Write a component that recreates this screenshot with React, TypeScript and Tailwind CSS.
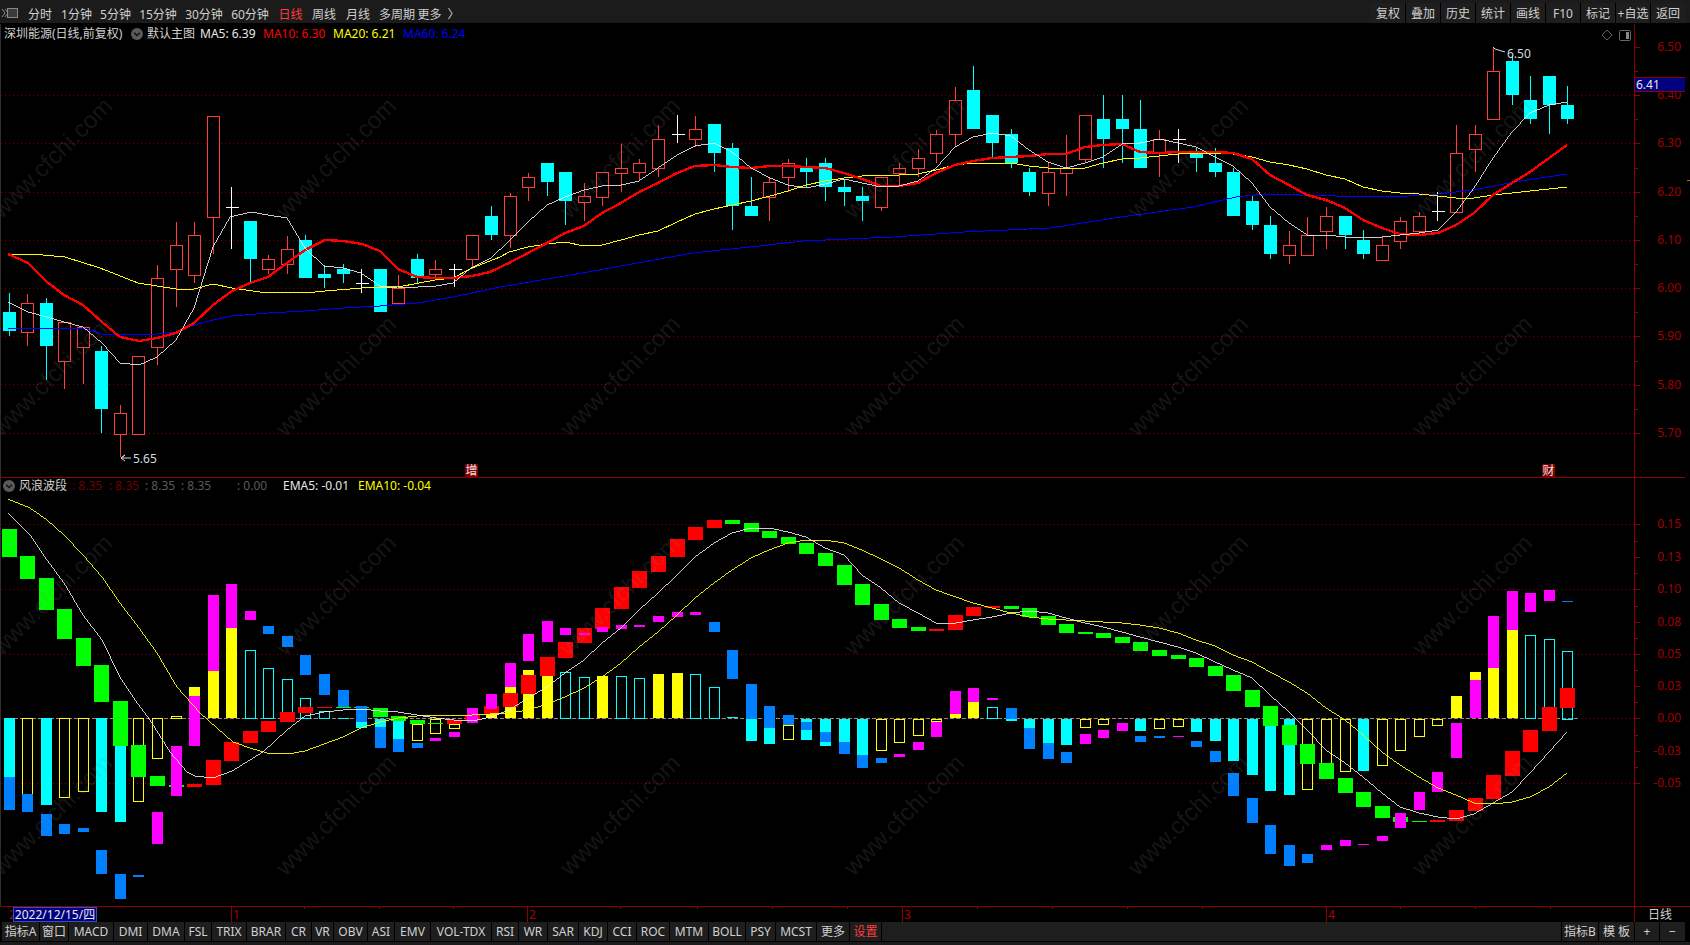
import React from "react";

type Candle = [string, number, number, number, number];
type Seg = [number, string, number, number];

// kind (r up, c down, x doji), body top, body bottom, high, low
const CANDLES: Candle[] = [
  ["c", 312, 331, 293, 336], ["r", 303, 332, 294, 346], ["c", 303, 346, 298, 380], ["r", 322, 361, 322, 389],
  ["r", 327, 347, 327, 384], ["c", 351, 409, 346, 433], ["r", 413, 434, 405, 457], ["r", 356, 434, 356, 434],
  ["r", 278, 347, 265, 365], ["r", 245, 269, 222, 307], ["r", 235, 275, 222, 283], ["r", 116, 217, 116, 254],
  ["x", 207, 207, 187, 249], ["c", 221, 259, 221, 283], ["r", 259, 269, 255, 274], ["r", 249, 264, 236, 274],
  ["c", 240, 278, 235, 278], ["c", 274, 278, 265, 288], ["c", 269, 274, 264, 283], ["x", 283, 283, 269, 293],
  ["c", 269, 312, 269, 312], ["r", 288, 303, 275, 303], ["c", 259, 278, 254, 283], ["r", 269, 274, 260, 278],
  ["x", 269, 269, 264, 287], ["r", 235, 259, 235, 269], ["c", 216, 235, 206, 240], ["r", 196, 235, 193, 248],
  ["r", 177, 187, 173, 201], ["c", 163, 182, 163, 196], ["c", 172, 201, 172, 225], ["r", 196, 202, 183, 221],
  ["r", 172, 197, 172, 206], ["r", 168, 173, 144, 192], ["r", 163, 172, 159, 180], ["r", 139, 168, 125, 177],
  ["x", 134, 134, 115, 143], ["r", 129, 139, 116, 147], ["c", 124, 153, 124, 172], ["c", 148, 206, 143, 230],
  ["c", 206, 216, 177, 216], ["r", 182, 197, 177, 221], ["r", 163, 177, 159, 192], ["c", 168, 172, 158, 187],
  ["c", 163, 187, 158, 201], ["c", 187, 192, 180, 206], ["c", 196, 201, 187, 221], ["r", 177, 207, 177, 211],
  ["r", 168, 173, 163, 185], ["r", 158, 168, 149, 177], ["r", 134, 153, 130, 163], ["r", 100, 134, 87, 147],
  ["c", 90, 129, 66, 129], ["c", 115, 143, 115, 158], ["c", 134, 163, 129, 168], ["c", 172, 192, 168, 196],
  ["r", 172, 193, 162, 206], ["r", 168, 173, 135, 196], ["r", 115, 159, 115, 162], ["c", 119, 139, 95, 168],
  ["c", 119, 129, 95, 163], ["c", 129, 168, 100, 168], ["r", 139, 153, 130, 177], ["x", 139, 139, 129, 163],
  ["c", 153, 158, 148, 172], ["c", 163, 172, 148, 177], ["c", 172, 216, 168, 216], ["c", 201, 225, 196, 230],
  ["c", 225, 254, 216, 259], ["r", 245, 255, 231, 264], ["r", 235, 255, 217, 255], ["r", 216, 231, 207, 249],
  ["c", 216, 235, 216, 249], ["c", 240, 254, 230, 259], ["r", 245, 260, 237, 260], ["r", 221, 241, 217, 249],
  ["r", 216, 231, 212, 235], ["x", 211, 211, 192, 221], ["r", 153, 212, 125, 212], ["r", 134, 149, 125, 172],
  ["r", 71, 119, 47, 119], ["c", 61, 95, 55, 105], ["c", 100, 119, 76, 124], ["c", 76, 105, 76, 134],
  ["c", 105, 119, 86, 124],
];

const MA5 =
  "8,302 28,312 47,317 64,322 83,327 102,343 120,363 139,365 157,357 176,340 194,308 213,247 230,217 251,212 268,215 287,218 305,248 324,266 343,268 361,273 380,286 398,287 418,287 436,286 453,283 471,268 491,258 509,241 528,222 547,205 565,197 584,190 602,186 621,185 639,181 658,168 677,155 695,146 714,143 732,152 751,168 770,178 788,185 806,188 825,184 844,179 862,183 881,187 899,186 918,181 936,168 955,147 973,137 992,133 1011,136 1029,150 1048,162 1066,168 1085,163 1103,157 1122,144 1140,143 1159,139 1178,143 1196,147 1215,157 1233,166 1252,183 1270,207 1289,223 1307,235 1326,235 1345,237 1363,237 1382,237 1400,235 1419,233 1438,230 1456,212 1474,188 1493,158 1512,132 1530,113 1549,105 1567,102";
const MA10 =
  "8,254 28,263 47,282 64,295 83,305 102,322 120,337 139,341 157,338 176,333 194,323 213,305 232,291 250,283 268,277 287,263 305,250 325,240 343,241 362,244 380,251 398,269 417,277 435,278 453,278 472,276 490,272 509,263 528,253 547,243 565,233 584,226 602,213 621,203 639,192 658,183 677,173 695,166 714,165 732,167 751,168 770,166 788,166 806,167 825,168 844,173 862,179 881,186 899,186 918,183 936,173 955,165 973,161 992,158 1011,157 1029,156 1048,154 1066,154 1085,147 1103,145 1122,144 1140,152 1159,153 1178,152 1196,152 1215,152 1233,153 1252,159 1270,175 1289,185 1307,195 1326,200 1345,208 1363,220 1382,228 1400,234 1419,235 1438,233 1456,225 1474,213 1493,195 1512,183 1530,172 1549,158 1567,145";
const MA20 =
  "8,254 32,254 65,257 100,268 138,283 176,289 194,289 213,284 232,288 260,292 287,292 305,293 325,291 362,288 398,287 435,280 453,278 472,268 500,257 509,252 528,247 547,244 565,242 584,246 602,245 621,240 639,235 658,231 677,222 695,214 714,209 732,205 751,201 770,196 788,191 806,185 825,181 844,178 862,176 881,175 899,175 918,174 936,170 955,165 973,163 992,163 1011,163 1029,166 1048,168 1066,169 1085,168 1103,163 1122,159 1140,158 1159,156 1178,154 1196,153 1215,153 1233,154 1252,157 1270,162 1289,165 1307,169 1326,175 1345,179 1363,187 1382,191 1400,193 1419,194 1438,196 1456,198 1474,198 1493,195 1512,193 1530,191 1549,189 1567,187";
const MA60 =
  "8,329 83,328 102,334 139,335 157,334 176,332 194,325 213,320 232,316 268,313 305,311 343,308 380,306 417,303 453,297 500,287 571,275 643,262 693,253 750,247 803,241 893,237 964,232 1050,228 1121,217 1193,207 1236,197 1264,194 1336,196 1407,196 1438,194 1474,190 1514,182 1567,174";
const EMA5 =
  "8,513 30,535 47,560 64,583 83,615 102,640 120,677 135,700 150,720 170,752 187,772 195,776 213,778 232,771 250,760 263,752 287,730 305,716 324,712 343,710 361,709 380,711 398,712 417,715 436,718 454,720 472,721 491,717 509,710 528,698 547,687 565,673 584,660 602,643 621,628 639,610 658,593 677,575 695,557 714,543 732,533 751,528 769,528 788,532 806,537 825,548 844,555 862,575 881,588 899,603 918,613 936,623 950,624 973,620 992,617 1011,613 1029,611 1048,613 1066,618 1085,623 1103,627 1122,632 1140,637 1159,642 1178,647 1196,653 1215,662 1233,670 1252,678 1270,695 1289,712 1307,730 1326,750 1345,763 1363,777 1382,793 1400,807 1419,813 1438,817 1456,819 1474,814 1493,803 1512,792 1530,773 1549,752 1567,732";
const EMA10 =
  "8,499 30,508 47,520 64,535 83,555 102,577 120,603 139,628 157,653 177,687 200,713 217,728 233,742 253,749 267,753 288,754 305,751 324,744 343,737 361,728 380,722 398,718 417,716 436,715 454,715 472,715 490,714 509,713 528,710 547,704 565,697 584,688 602,677 621,663 639,647 658,632 677,615 695,598 714,583 732,570 751,558 769,550 788,543 806,540 825,540 844,543 862,550 881,559 899,568 918,580 936,590 950,595 973,603 992,608 1011,613 1029,617 1048,619 1066,620 1085,621 1103,622 1122,623 1140,625 1159,628 1178,633 1196,640 1215,646 1233,655 1252,662 1270,672 1289,682 1307,693 1326,708 1345,720 1363,735 1382,752 1400,765 1419,777 1438,788 1456,795 1474,803 1493,804 1512,802 1530,797 1549,787 1567,773";

// bar index, kind, top, bottom
const HIST: Seg[] = [
  [0, "c", 718, 777], [1, "Y", 718, 794], [2, "c", 718, 805], [3, "Y", 718, 797], [4, "Y", 718, 791], [5, "c", 718, 812],
  [6, "c", 718, 822], [7, "Y", 718, 801], [8, "Y", 718, 758], [9, "Y", 716, 718], [10, "y", 687, 696], [11, "y", 671, 718],
  [12, "y", 628, 718], [13, "C", 650, 718], [14, "C", 668, 718], [15, "C", 679, 718], [16, "C", 698, 718], [17, "C", 711, 718],
  [18, "c", 718, 719], [19, "c", 722, 728], [20, "c", 719, 727], [21, "c", 721, 739], [22, "Y", 724, 740], [23, "Y", 719, 733],
  [24, "Y", 724, 728], [26, "y", 714, 718], [27, "y", 687, 718], [28, "y", 670, 718], [29, "y", 676, 718], [30, "C", 672, 718],
  [31, "C", 677, 718], [32, "y", 676, 718], [33, "C", 676, 718], [34, "C", 678, 718], [35, "y", 674, 718], [36, "y", 673, 718],
  [37, "C", 674, 718], [38, "C", 687, 718], [39, "c", 717, 718], [40, "c", 719, 741], [41, "c", 728, 744], [42, "Y", 725, 739],
  [43, "c", 719, 740], [44, "c", 719, 746], [45, "c", 719, 742], [46, "c", 719, 755], [47, "Y", 719, 750], [48, "Y", 719, 742],
  [49, "Y", 719, 735], [50, "Y", 719, 721], [51, "y", 714, 718], [52, "y", 702, 718], [53, "C", 707, 718], [54, "c", 719, 721],
  [55, "c", 719, 728], [56, "c", 719, 743], [57, "c", 719, 745], [58, "Y", 719, 727], [59, "Y", 719, 724], [61, "c", 719, 731],
  [62, "Y", 719, 728], [63, "Y", 719, 726], [64, "c", 719, 732], [65, "c", 719, 741], [66, "c", 719, 761], [67, "c", 719, 775],
  [68, "c", 719, 791], [69, "c", 719, 795], [70, "Y", 719, 789], [71, "Y", 719, 763], [72, "Y", 719, 771], [73, "c", 719, 771],
  [74, "Y", 719, 765], [75, "Y", 719, 750], [76, "Y", 719, 736], [77, "Y", 719, 725], [78, "y", 696, 718], [79, "y", 672, 680],
  [80, "y", 668, 718], [81, "y", 630, 718], [82, "C", 635, 718], [83, "C", 639, 718], [84, "C", 651, 719],
];

const WAVE: Seg[] = [
  [0, "g", 529, 557], [1, "g", 556, 579], [2, "g", 578, 610], [3, "g", 609, 639], [4, "g", 638, 666], [5, "g", 665, 702],
  [6, "g", 701, 746], [7, "g", 745, 777], [8, "g", 776, 786], [9, "g", 785, 787], [10, "r", 784, 787], [11, "r", 760, 785],
  [12, "r", 742, 761], [13, "r", 731, 743], [14, "r", 721, 732], [15, "r", 712, 722], [16, "r", 707, 713], [17, "r", 707, 708],
  [18, "g", 707, 708], [19, "g", 707, 708], [20, "g", 708, 717], [21, "g", 716, 721], [22, "g", 720, 724], [23, "g", 723, 724],
  [24, "r", 720, 724], [25, "r", 715, 720], [26, "r", 706, 714], [27, "r", 693, 707], [28, "r", 675, 694], [29, "r", 657, 676],
  [30, "r", 642, 658], [31, "r", 628, 643], [32, "r", 608, 629], [33, "r", 587, 609], [34, "r", 571, 588], [35, "r", 556, 572],
  [36, "r", 539, 557], [37, "r", 527, 540], [38, "r", 520, 528], [39, "g", 520, 524], [40, "g", 523, 532], [41, "g", 531, 538],
  [42, "g", 537, 544], [43, "g", 543, 554], [44, "g", 553, 566], [45, "g", 565, 585], [46, "g", 584, 605], [47, "g", 604, 620],
  [48, "g", 619, 628], [49, "g", 627, 631], [50, "r", 629, 631], [51, "r", 615, 630], [52, "r", 607, 616], [53, "r", 606, 608],
  [54, "g", 606, 609], [55, "g", 608, 617], [56, "g", 616, 625], [57, "g", 624, 633], [58, "g", 632, 634], [59, "g", 633, 638],
  [60, "g", 637, 643], [61, "g", 642, 651], [62, "g", 650, 656], [63, "g", 655, 659], [64, "g", 658, 667], [65, "g", 666, 676],
  [66, "g", 675, 691], [67, "g", 690, 707], [68, "g", 706, 726], [69, "g", 725, 745], [70, "g", 744, 764], [71, "g", 763, 779],
  [72, "g", 778, 793], [73, "g", 792, 807], [74, "g", 806, 818], [75, "g", 817, 822], [76, "g", 821, 822], [77, "r", 820, 822],
  [78, "r", 810, 821], [79, "r", 798, 811], [80, "r", 775, 799], [81, "r", 751, 776], [82, "r", 730, 752], [83, "r", 707, 731],
  [84, "r", 688, 708],
];

const SPOT: Seg[] = [
  [0, "b", 777, 810], [1, "b", 794, 812], [2, "b", 814, 836], [3, "b", 824, 834], [4, "b", 828, 832], [5, "b", 850, 874],
  [6, "b", 874, 899], [7, "b", 875, 877], [8, "m", 812, 844], [9, "m", 746, 796], [10, "m", 696, 746], [11, "m", 595, 671],
  [12, "m", 584, 628], [13, "m", 611, 620], [14, "b", 626, 634], [15, "b", 636, 647], [16, "b", 655, 675], [17, "b", 674, 695],
  [18, "b", 690, 707], [19, "b", 706, 722], [20, "b", 727, 748], [21, "b", 739, 752], [22, "b", 743, 748], [23, "m", 738, 741],
  [24, "m", 732, 737], [25, "m", 708, 723], [26, "m", 694, 709], [27, "m", 663, 687], [28, "m", 634, 661], [29, "m", 621, 642],
  [30, "m", 628, 635], [31, "m", 633, 635], [32, "m", 627, 632], [33, "m", 625, 629], [34, "m", 625, 627], [35, "m", 616, 622],
  [36, "m", 612, 617], [37, "m", 612, 615], [38, "b", 622, 632], [39, "b", 650, 679], [40, "b", 684, 719], [41, "b", 706, 728],
  [42, "b", 715, 725], [43, "b", 722, 730], [44, "b", 732, 742], [45, "b", 742, 754], [46, "b", 755, 768], [47, "b", 758, 763],
  [48, "m", 754, 757], [49, "m", 742, 750], [50, "m", 722, 737], [51, "m", 691, 714], [52, "m", 688, 702], [53, "m", 698, 700],
  [54, "b", 708, 719], [55, "b", 728, 749], [56, "b", 743, 759], [57, "b", 752, 763], [58, "m", 734, 744], [59, "m", 730, 738],
  [60, "m", 723, 731], [61, "b", 736, 742], [62, "b", 736, 738], [63, "m", 736, 737], [64, "b", 741, 747], [65, "b", 751, 762],
  [66, "b", 773, 796], [67, "b", 798, 823], [68, "b", 825, 854], [69, "b", 845, 866], [70, "b", 854, 863], [71, "m", 845, 850],
  [72, "m", 840, 846], [73, "m", 844, 845], [74, "m", 836, 841], [75, "m", 813, 828], [76, "m", 792, 810], [77, "m", 772, 792],
  [78, "m", 723, 758], [79, "m", 680, 718], [80, "m", 616, 668], [81, "m", 591, 630], [82, "m", 593, 612], [83, "m", 590, 601],
  [84, "b", 601, 602],
];

const COLORS: Record<string, string> = {
  c: "#00ffff", C: "#00ffff", y: "#ffff00", Y: "#ffff00", g: "#00ff00", r: "#ff0000", b: "#0080ff", m: "#ff00ff",
};

const UPPER_GRID = [95.5, 143.5, 192.5, 240.5, 288.5, 336.5, 384.5, 433.5];
const LOWER_GRID = [524.5, 589.5, 654.5, 783.5];

const UPPER_TICKS = [
  { y: 47, label: "6.50" }, { y: 95, label: "6.40" }, { y: 143, label: "6.30" }, { y: 192, label: "6.20" }, { y: 240, label: "6.10" },
  { y: 288, label: "6.00" }, { y: 336, label: "5.90" }, { y: 385, label: "5.80" }, { y: 433, label: "5.70" },
];
const LOWER_TICKS = [
  { y: 524, label: "0.15" }, { y: 557, label: "0.13" }, { y: 589, label: "0.10" }, { y: 622, label: "0.08" }, { y: 654, label: "0.05" },
  { y: 686, label: "0.03" }, { y: 718, label: "0.00" }, { y: 751, label: "-0.03" }, { y: 783, label: "-0.05" },
];

const LEFT_TABS = [
  { label: "分时", w: "w-[36px]" }, { label: "1分钟", w: "w-[37px]" }, { label: "5分钟", w: "w-[41px]" }, { label: "15分钟", w: "w-[44px]" },
  { label: "30分钟", w: "w-[48px]" }, { label: "60分钟", w: "w-[44px]" }, { label: "日线", w: "w-[37px]", active: true }, { label: "周线", w: "w-[30px]" },
  { label: "月线", w: "w-[38px]" }, { label: "多周期", w: "w-[40px]" }, { label: "更多  〉", w: "w-[43px]" },
];
const RIGHT_TABS = ["复权", "叠加", "历史", "统计", "画线", "F10", "标记", "+自选", "返回"];

const BOTTOM_TABS = [
  { label: "指标A", w: "w-[37px]" }, { label: "窗口", w: "w-[28px]" }, { label: "MACD", w: "w-[44px]" }, { label: "DMI", w: "w-[33px]" },
  { label: "DMA", w: "w-[36px]" }, { label: "FSL", w: "w-[26px]" }, { label: "TRIX", w: "w-[34px]" }, { label: "BRAR", w: "w-[38px]" },
  { label: "CR", w: "w-[25px]" }, { label: "VR", w: "w-[21px]" }, { label: "OBV", w: "w-[33px]" }, { label: "ASI", w: "w-[26px]" },
  { label: "EMV", w: "w-[35px]" }, { label: "VOL-TDX", w: "w-[60px]" }, { label: "RSI", w: "w-[26px]" }, { label: "WR", w: "w-[28px]" },
  { label: "SAR", w: "w-[30px]" }, { label: "KDJ", w: "w-[28px]" }, { label: "CCI", w: "w-[28px]" }, { label: "ROC", w: "w-[32px]" },
  { label: "MTM", w: "w-[38px]" }, { label: "BOLL", w: "w-[36px]" }, { label: "PSY", w: "w-[29px]" }, { label: "MCST", w: "w-[40px]" },
  { label: "更多", w: "w-[32px]" }, { label: "设置", w: "w-[31px]", active: true },
];

const WATERMARK_X = [52, 336, 620, 904, 1188, 1472];
const WEEK_TICKS = [304, 379, 453, 620, 697, 772, 847, 977, 1052, 1127, 1202, 1400, 1475, 1550];
const MONTH_TICKS = [
  { x: 231, label: "1" }, { x: 527, label: "2" }, { x: 902, label: "3" }, { x: 1326, label: "4" },
];

const barX = (i: number) => Math.round(8.5 + i * 18.557);

function Watermarks({ rows }: { rows: number[] }) {
  return (
    <>
      {rows.map((y) =>
        WATERMARK_X.map((x) => (
          <text
            key={`${x}-${y}`}
            x={x}
            y={y + 8}
            textAnchor="middle"
            transform={`rotate(-45 ${x} ${y})`}
            fill="#808080"
            fillOpacity={0.18}
            fontSize={24}
            fontFamily="'Liberation Sans', sans-serif"
          >
            www.cfchi.com
          </text>
        ))
      )}
    </>
  );
}

function Candles() {
  return (
    <g shapeRendering="crispEdges">
      {CANDLES.map(([kind, top, bot, hi, lo], i) => {
        const x = barX(i) + 0.5;
        if (kind === "x") {
          return (
            <g key={i} stroke="#ffffff">
              <line x1={x} x2={x} y1={hi} y2={lo} />
              <line x1={x - 6} x2={x + 7} y1={top + 0.5} y2={top + 0.5} />
            </g>
          );
        }
        const color = kind === "r" ? "#ff3c3c" : "#00ffff";
        return (
          <g key={i} stroke={color}>
            {hi < top && <line x1={x} x2={x} y1={hi} y2={top} />}
            {lo > bot && <line x1={x} x2={x} y1={bot} y2={lo} />}
            {kind === "r" ? (
              <rect x={x - 6} y={top + 0.5} width={12} height={bot - top} fill="#000000" />
            ) : (
              <rect x={x - 6.5} y={top} width={13} height={bot - top} fill={color} stroke="none" />
            )}
          </g>
        );
      })}
    </g>
  );
}

function Segments({ data, half }: { data: Seg[]; half: number }) {
  return (
    <g shapeRendering="crispEdges">
      {data.map(([i, kind, top, bot]) => {
        const x = barX(i) + 0.5;
        if (kind === "C" || kind === "Y") {
          return (
            <rect key={`${i}${kind}`} x={x - half + 0.5} y={top + 0.5} width={half * 2 - 1} height={bot - top} fill="none" stroke={COLORS[kind]} />
          );
        }
        return <rect key={`${i}${kind}${top}`} x={x - half} y={top} width={half * 2} height={bot - top} fill={COLORS[kind]} />;
      })}
    </g>
  );
}

function UpperChart() {
  return (
    <svg width={1634} height={453} viewBox="0 24 1634 453" className="block">
      {UPPER_GRID.map((y) => (
        <line key={y} x1={1} x2={1634} y1={y} y2={y} stroke="#800000" strokeDasharray="1 3" shapeRendering="crispEdges" />
      ))}
      <Candles />
      <g fill="none" shapeRendering="crispEdges">
        <polyline points={MA60} stroke="#0000ff" strokeWidth={1} />
        <polyline points={MA20} stroke="#ffff00" strokeWidth={1} />
        <polyline points={MA10} stroke="#ff0000" strokeWidth={2.4} />
        <polyline points={MA5} stroke="#ffffff" strokeWidth={0.8} />
      </g>

      <polyline points="1505,52 1495,49 1493,47" fill="none" stroke="#d8d8d8" />
      <text x={1507} y={58} fontSize={12} fill="#d0dce4" fontFamily="'Noto Sans', sans-serif">6.50</text>
      <polyline points="131,458 121,458 125,455 121,458 125,461" fill="none" stroke="#d8d8d8" />
      <text x={133} y={463} fontSize={12} fill="#d0dce4" fontFamily="'Noto Sans', sans-serif">5.65</text>

      <rect x={465} y={464} width={13} height={13} fill="#7f0000" />
      <text x={471.5} y={475} textAnchor="middle" fontSize={12} fill="#e8e0e0" fontFamily="'Noto Sans CJK SC', sans-serif">增</text>
      <rect x={1542} y={464} width={13} height={13} fill="#7f0000" />
      <text x={1548.5} y={475} textAnchor="middle" fontSize={12} fill="#e8e0e0" fontFamily="'Noto Sans CJK SC', sans-serif">财</text>

      <Watermarks rows={[158, 376]} />
    </svg>
  );
}

function LowerChart() {
  return (
    <svg width={1634} height={428} viewBox="0 478 1634 428" className="block">
      {LOWER_GRID.map((y) => (
        <line key={y} x1={1} x2={1634} y1={y} y2={y} stroke="#800000" strokeDasharray="1 3" shapeRendering="crispEdges" />
      ))}
      <line x1={1} x2={1634} y1={718.5} y2={718.5} stroke="#800000" strokeDasharray="1 3" shapeRendering="crispEdges" />
      <line x1={8} x2={1578} y1={718.5} y2={718.5} stroke="#8c8c8c" strokeDasharray="4 2" shapeRendering="crispEdges" />
      <Segments data={HIST} half={5.5} />
      <Segments data={WAVE} half={7.5} />
      <Segments data={SPOT} half={5.5} />
      <g fill="none" shapeRendering="crispEdges">
        <polyline points={EMA10} stroke="#ffff00" strokeWidth={0.9} />
        <polyline points={EMA5} stroke="#ffffff" strokeWidth={0.8} />
      </g>
      <Watermarks rows={[595, 815]} />
    </svg>
  );
}

function Axis({ ticks, offset }: { ticks: { y: number; label: string }[]; offset: number }) {
  return (
    <div className="relative flex-1 text-[12px] text-[#a00000]">
      {ticks.map((t, i) => (
        <React.Fragment key={t.label}>
          <div className="absolute left-0 h-px w-[5px] bg-[#8b0000]" style={{ top: t.y - offset }} />
          {i < ticks.length - 1 && (
            <div
              className="absolute left-0 h-px w-[3px] bg-[#8b0000]"
              style={{ top: Math.round((t.y + ticks[i + 1].y) / 2) - offset }}
            />
          )}
          <div className="absolute right-[4px] leading-[14px]" style={{ top: t.y - offset - 7 }}>
            {t.label}
          </div>
        </React.Fragment>
      ))}
    </div>
  );
}

function Chevron() {
  return (
    <svg width={12} height={12} viewBox="0 0 12 12" className="shrink-0">
      <circle cx={6} cy={6} r={6} fill="#5a5a5a" />
      <polyline points="3.2,4.8 6,7.6 8.8,4.8" fill="none" stroke="#111111" strokeWidth={1.4} />
    </svg>
  );
}

export default function App() {
  return (
    <div className="flex h-[945px] w-[1690px] flex-col overflow-hidden bg-black font-['Noto_Sans','Noto_Sans_CJK_SC',sans-serif] text-[12px] leading-none text-[#d0d0d0]">
      {/* Period toolbar */}
      <div className="flex h-[24px] shrink-0 border-b border-black bg-[#1b1b1b] pt-[3px] pr-[5px]">
        <div className="flex w-[22px] items-center pl-[1px]">
          <svg width={17} height={12} viewBox="0 0 17 12">
            <path d="M1 2 L4 6 L1 10 M4 2 L7 6 L4 10" fill="none" stroke="#8a8a8a" />
            <rect x={6.5} y={1.5} width={10} height={9} fill="#3a3a3a" stroke="#8a8a8a" />
          </svg>
        </div>
        {LEFT_TABS.map((t) => (
          <div key={t.label} className={`flex items-center justify-center pt-[3px] whitespace-pre ${t.w} ${t.active ? "text-[#ff3c3c]" : ""}`}>
            {t.label}
          </div>
        ))}
        <div className="ml-auto flex gap-px bg-black">
          {RIGHT_TABS.map((t) => (
            <div key={t} className="flex w-[34px] items-center justify-center bg-[#1e1e1e] pt-[2px]">
              {t}
            </div>
          ))}
        </div>
      </div>

      {/* Main chart */}
      <div className="flex h-[454px] shrink-0">
        <div className="relative w-[1634px]">
          <UpperChart />
          <div className="absolute top-0 left-0 h-full w-px bg-[#2e2e2e]" />
          <div className="absolute top-0 left-0 flex h-[20px] items-center pl-[4px] whitespace-nowrap">
            <span className="w-[127px]">深圳能源(日线,前复权)</span>
            <Chevron />
            <span className="ml-[4px] w-[53px]">默认主图</span>
            <span className="w-[63px] text-[#e8e8e8]">MA5: 6.39</span>
            <span className="w-[70px] text-[#ff0000]">MA10: 6.30</span>
            <span className="w-[70px] text-[#ffff00]">MA20: 6.21</span>
            <span className="text-[#0000ff]">MA60: 6.24</span>
          </div>
          <div className="absolute top-[5px] right-[3px] flex items-center gap-[6px]">
            <svg width={12} height={12} viewBox="0 0 12 12">
              <path d="M6 1 L11 6 L6 11 L1 6 Z" fill="none" stroke="#5f5f5f" />
            </svg>
            <svg width={12} height={11} viewBox="0 0 12 11">
              <rect x={0.5} y={0.5} width={11} height={10} rx={1} fill="none" stroke="#6a6a6a" />
              <rect x={7} y={2} width={3} height={7} fill="#8a8a8a" />
            </svg>
          </div>
          <div className="absolute bottom-0 left-0 h-px w-full bg-[#8b0000]" />
        </div>
        <div className="relative flex w-[51px] border-l border-[#8b0000]">
          <Axis ticks={UPPER_TICKS} offset={24} />
          <div className="absolute top-[53px] left-0 flex h-[15px] w-[50px] items-center border-y border-[#8b0000] bg-[#000080] pl-[1px] text-[12px] text-[#e8e8e8]">
            6.41
          </div>
          <div className="absolute bottom-0 left-0 h-px w-full bg-[#8b0000]" />
        </div>
        <div className="relative w-[5px]">
          <div className="absolute top-[156px] right-0 h-px w-[3px] bg-[#a87830]" />
        </div>
      </div>

      {/* Indicator chart */}
      <div className="flex h-[428px] shrink-0">
        <div className="relative w-[1634px]">
          <LowerChart />
          <div className="absolute top-0 left-0 h-full w-px bg-[#2e2e2e]" />
          <div className="absolute top-0 left-0 flex h-[15px] items-center pl-[3px] whitespace-nowrap">
            <Chevron />
            <span className="ml-[4px] w-[53px]">风浪波段</span>
            <span className="w-[37px] text-[#6e0000]">: 8.35</span>
            <span className="w-[36px] text-[#6e0000]">: 8.35</span>
            <span className="w-[36px] text-[#5a5a5a]">: 8.35</span>
            <span className="w-[56px] text-[#5a5a5a]">: 8.35</span>
            <span className="w-[46px] text-[#5a5a5a]">: 0.00</span>
            <span className="w-[75px] text-[#e8e8e8]">EMA5: -0.01</span>
            <span className="text-[#ffff00]">EMA10: -0.04</span>
          </div>
        </div>
        <div className="relative flex w-[51px] border-l border-[#8b0000]">
          <Axis ticks={LOWER_TICKS} offset={478} />
        </div>
        <div className="w-[5px]" />
      </div>

      {/* Date axis */}
      <div className="flex h-[16px] shrink-0 border-t border-[#8b0000]">
        <div className="relative w-[1634px] text-[#b00000]">
          {WEEK_TICKS.map((x) => (
            <div key={x} className="absolute top-0 h-[2px] w-px bg-[#8b0000]" style={{ left: x }} />
          ))}
          {MONTH_TICKS.map((m) => (
            <div key={m.x} className="absolute top-0 flex h-[15px] items-center border-l border-[#8b0000] pl-[1px]" style={{ left: m.x }}>
              {m.label}
            </div>
          ))}
          <span className="absolute top-0 left-[9px] leading-[15px]">2</span>
          <div className="absolute top-0 left-[13px] flex h-[15px] w-[84px] items-center justify-center border border-[#3050c0] bg-[#000080] text-[#e8e8e8]">
            2022/12/15/四
          </div>
        </div>
        <div className="flex w-[51px] items-center justify-center border-l border-[#8b0000]">日线</div>
      </div>

      {/* Indicator tabs */}
      <div className="flex h-[19px] shrink-0 gap-px bg-black pl-[2px]">
        {BOTTOM_TABS.map((t) => (
          <div key={t.label} className={`flex items-center justify-center bg-[#1e1e1e] ${t.w} ${t.active ? "text-[#ff3c3c]" : ""}`}>
            {t.label}
          </div>
        ))}
        <div className="flex-1 bg-[#1e1e1e]" />
        <div className="flex w-[36px] items-center justify-center bg-[#1e1e1e]">指标B</div>
        <div className="flex w-[35px] items-center justify-center bg-[#1e1e1e]">模 板</div>
        <div className="flex w-[24px] items-center justify-center bg-[#1e1e1e]">+</div>
        <div className="mr-[5px] flex w-[25px] items-center justify-center bg-[#1e1e1e]">−</div>
      </div>
      <div className="mt-[1px] flex-1 bg-[#1b1b1b]" />
    </div>
  );
}
